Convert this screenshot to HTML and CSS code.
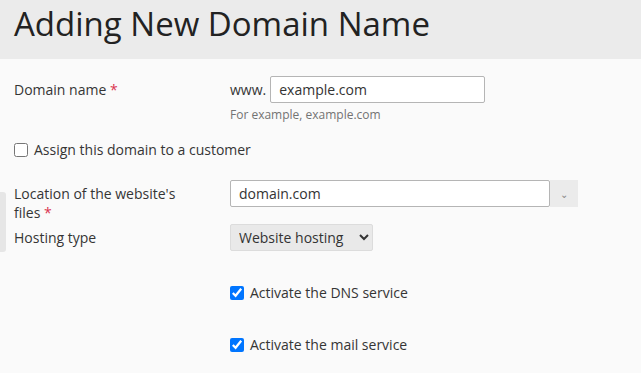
FILE: index.html
```html
<!DOCTYPE html>
<html lang="en">
<head>
  <meta charset="UTF-8">
  <meta name="viewport" content="width=device-width, initial-scale=1.0">
  <title>Adding New Domain Name</title>
  <link rel="stylesheet" href="styles.css">
</head>
<body>

<div class="page-header">
  <h1>Adding New Domain Name</h1>
</div>

<div class="side-handle"></div>

<form class="domain-form">
  <div class="form-row">
    <label class="field-label" for="domain">Domain name <span class="required">*</span></label>
    <div class="field">
      <div class="prefixed">
        <span class="prefix">www.</span>
        <input type="text" id="domain" class="text-input domain-input" value="example.com">
      </div>
      <div class="hint">For example, example.com</div>
    </div>
  </div>

  <div class="check-row standalone">
    <input type="checkbox" id="assign">
    <label for="assign">Assign this domain to a customer</label>
  </div>

  <div class="form-row location-row">
    <label class="field-label" for="location">Location of the website's files <span class="required">*</span></label>
    <div class="field">
      <div class="combo">
        <input type="text" id="location" class="text-input combo-input" value="domain.com">
        <span class="combo-button">&#8964;</span>
      </div>
    </div>
  </div>

  <div class="form-row hosting-row">
    <label class="field-label" for="hosting">Hosting type</label>
    <div class="field">
      <select id="hosting" class="select">
        <option>Website hosting</option>
        <option>Forwarding</option>
        <option>No hosting</option>
      </select>
    </div>
  </div>

  <div class="check-row indented dns-row">
    <input type="checkbox" id="dns" checked>
    <label for="dns">Activate the DNS service</label>
  </div>

  <div class="check-row indented mail-row">
    <input type="checkbox" id="mail" checked>
    <label for="mail">Activate the mail service</label>
  </div>
</form>

</body>
</html>
```

FILE: styles.css
```css
body {
  margin: 0;
  font-family: 'Open Sans', sans-serif;
  font-size: 14px;
  color: #353535;
  background: #fafafa;
}

.page-header {
  height: 59px;
  padding-left: 14px;
  background: #ebebeb;
}

.page-header h1 {
  margin: 0;
  font-size: 33px;
  font-weight: 400;
  line-height: 47px;
  color: #222;
}

.side-handle {
  position: absolute;
  left: 0;
  top: 192px;
  width: 6px;
  height: 60px;
  background: #e6e6e6;
  border-radius: 0 3px 3px 0;
}

.domain-form {
  padding: 17px 14px 0;
}

.form-row {
  display: flex;
  align-items: baseline;
}

.field-label {
  width: 182px;
  margin-right: 34px;
  line-height: 19px;
}

.required {
  color: #d9344f;
}

.prefixed {
  display: flex;
  align-items: baseline;
  gap: 4px;
}

.text-input {
  box-sizing: border-box;
  height: 27px;
  padding: 0 8px;
  border: 1px solid #b5b5b5;
  border-radius: 2px;
  background: #fff;
  font-family: inherit;
  font-size: 14px;
  color: #333;
}

.domain-input {
  width: 215px;
}

.hint {
  margin-top: 4px;
  font-size: 12px;
  line-height: 16px;
  color: #737373;
}

.check-row {
  display: flex;
  align-items: center;
  gap: 6px;
  line-height: 20px;
}

.check-row input {
  width: 14px;
  height: 14px;
  margin: 0;
}

.standalone {
  margin-top: 17px;
}

.indented {
  margin-left: 216px;
}

.location-row {
  margin-top: 20px;
}

.combo {
  display: flex;
}

.combo-input {
  width: 320px;
}

.combo-button {
  display: flex;
  align-items: center;
  justify-content: center;
  width: 28px;
  height: 27px;
  background: #ebebeb;
  color: #888;
  font-size: 10px;
  line-height: 1;
}

.hosting-row {
  margin-top: 2px;
}

.select {
  box-sizing: border-box;
  width: 143px;
  height: 27px;
  padding: 0 4px;
  border: 1px solid #dcdcdc;
  border-radius: 2px;
  background: #e9e9e9;
  font-family: inherit;
  font-size: 14px;
  color: #333;
}

.dns-row {
  margin-top: 32px;
}

.mail-row {
  margin-top: 32px;
}
```
